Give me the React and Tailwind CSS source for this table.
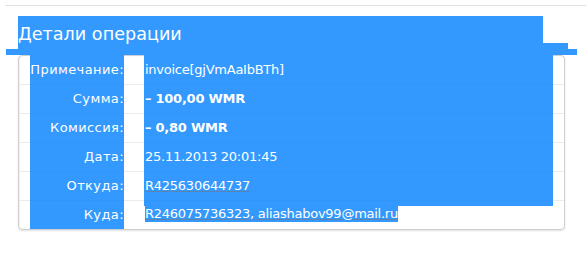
import React from 'react';

const rows = [
  { label: 'Примечание:', value: 'invoice[gjVmAaIbBTh]' },
  { label: 'Сумма:', value: '– 100,00 WMR', bold: true },
  { label: 'Комиссия:', value: '– 0,80 WMR', bold: true },
  { label: 'Дата:', value: '25.11.2013 20:01:45' },
  { label: 'Откуда:', value: 'R425630644737', link: true },
];

const Row = ({ row, first }) => (
  <div className="flex h-[29px]">
    <div className="w-[11px] border-b border-[#ebebeb]" />
    <div
      className={`w-[94px] bg-[#3399ff] border-b border-[#3395f8] text-right text-white leading-[28px] tracking-[0.4px] whitespace-nowrap ${
        first ? '-mt-px h-[30px] pt-px' : ''
      }`}
    >
      {row.label}
    </div>
    <div className="w-[20px] border-b border-[#ebebeb]" />
    <div
      className={`w-[409px] bg-[#3399ff] border-b border-[#3395f8] pl-px text-white leading-[28px] tracking-[-0.25px] whitespace-nowrap ${
        first ? '-mt-px h-[30px] pt-px' : ''
      } ${row.bold ? 'font-bold' : ''}`}
    >
      {row.link ? (
        <span className="underline decoration-[#5b84b1]">{row.value}</span>
      ) : (
        row.value
      )}
    </div>
    <div className="flex-1 border-b border-[#ebebeb]" />
  </div>
);

export default function App() {
  return (
    <div className="w-[586px] h-[257px] bg-white overflow-hidden font-['DejaVu_Sans',sans-serif] text-[13px]">
      <div className="pt-[5px] pl-[5px]">
        <div className="h-px bg-[#e0e0e0]" />
      </div>

      <div className="mt-[10px] ml-[18px] w-[525px] h-[27px] bg-[#3399ff] pt-[8px] text-white text-[17.6px] leading-[20px]">
        Детали операции
      </div>
      <div className="ml-[18px] w-[550px] h-[6px] bg-[#3399ff]" />
      <div className="ml-[6px] w-[571px] h-[6px] bg-[#3399ff]" />

      <div className="ml-[18px] w-[547px] border border-[#cfcfcf] rounded-[4px] shadow-[0_1px_2px_rgba(0,0,0,0.12),inset_1px_0_2px_rgba(0,0,0,0.06)]">
        {rows.map((row, i) => (
          <Row key={row.label} row={row} first={i === 0} />
        ))}

        <div className="flex h-[28px]">
          <div className="w-[11px]" />
          <div className="w-[94px] bg-[#3399ff] text-right text-white leading-[28px] tracking-[0.4px] whitespace-nowrap">
            Куда:
          </div>
          <div className="w-[20px]" />
          <div className="w-[409px] flex flex-col">
            <div className="h-[5px] bg-[#3399ff]" />
            <div className="h-[16px] leading-[16px] pl-px tracking-[-0.25px] whitespace-nowrap">
              <span className="bg-[#3399ff] text-white underline decoration-[#5b84b1] inline-block h-[16px]">
                R246075736323, aliashabov99@mail.ru
              </span>
            </div>
          </div>
          <div className="flex-1" />
        </div>
      </div>
    </div>
  );
}
